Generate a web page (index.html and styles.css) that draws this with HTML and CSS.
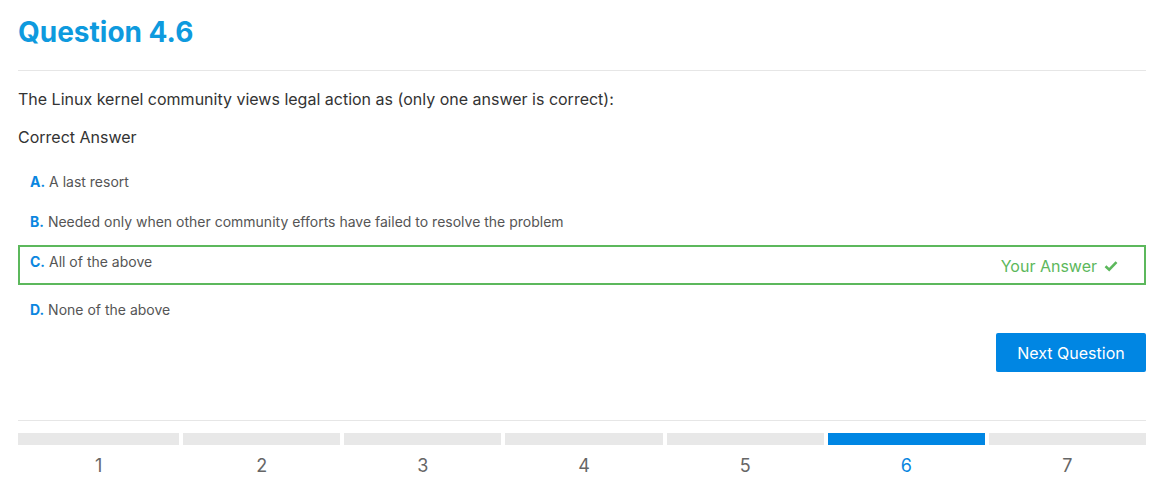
FILE: index.html
```html
<!DOCTYPE html>
<html>
<head>
<meta charset="utf-8">
<link rel="stylesheet" href="styles.css">
</head>
<body>
<div class="page">
  <h1 class="title">Question 4.6</h1>
  <hr class="rule">
  <p class="question">The Linux kernel community views legal action as (only one answer is correct):</p>
  <p class="subhead">Correct Answer</p>
  <ul class="options">
    <li class="option"><span><span class="letter">A.</span> A last resort</span></li>
    <li class="option"><span><span class="letter">B.</span> Needed only when other community efforts have failed to resolve the problem</span></li>
    <li class="option selected"><span><span class="letter">C.</span> All of the above</span>
      <span class="yours">Your Answer
        <svg class="check" viewBox="0 0 14 12" width="14" height="12"><path d="M1.5 6.2 L5.2 9.6 L12.5 2.2" fill="none" stroke="#5cb85c" stroke-width="2.6"/></svg>
      </span>
    </li>
    <li class="option"><span><span class="letter">D.</span> None of the above</span></li>
  </ul>
  <div class="actions"><button class="next">Next Question</button></div>
  <hr class="rule rule-bottom">
  <div class="steps">
    <div class="step"><div class="bar"></div><div class="num">1</div></div>
    <div class="step"><div class="bar"></div><div class="num">2</div></div>
    <div class="step"><div class="bar"></div><div class="num">3</div></div>
    <div class="step"><div class="bar"></div><div class="num">4</div></div>
    <div class="step"><div class="bar"></div><div class="num">5</div></div>
    <div class="step current"><div class="bar"></div><div class="num">6</div></div>
    <div class="step"><div class="bar"></div><div class="num">7</div></div>
  </div>
</div>
</body>
</html>
```
FILE: styles.css
```css
* { box-sizing: border-box; }
html, body { margin: 0; padding: 0; background: #fff; }
body { font-family: Inter, "Noto Sans", sans-serif; color: #333; }
.page { padding: 0 18px; }
.title {
  margin: 0;
  padding-top: 14px;
  font-size: 28px;
  line-height: 36px;
  font-weight: 700;
  color: #0e9ade;
}
.rule { border: 0; border-top: 1px solid #e6e6e6; margin: 20px 0 0; }
.question { margin: 17px 0 0; font-size: 16px; line-height: 22px; color: #333; }
.subhead { margin: 16px 0 0; font-size: 16px; line-height: 22px; color: #333; }
.options { list-style: none; margin: 14px 0 0; padding: 0; }
.option {
  display: flex;
  justify-content: space-between;
  align-items: flex-start;
  height: 40px;
  padding: 10px 12px;
  font-size: 14px;
  line-height: 20px;
  color: #555;
}
.option.selected {
  border: 2px solid #5cb85c;
  margin: 3px 0 5px;
  padding: 5px 10px;
}
.letter { color: #0a86e0; font-weight: 700; }
.yours {
  color: #5cb85c;
  font-size: 16px;
  line-height: 20px;
  margin-top: 4px;
  margin-right: 16px;
  display: flex;
  align-items: center;
  gap: 7px;
}
.check { display: block; }
.actions { display: flex; justify-content: flex-end; margin-top: 3px; }
.next {
  font-family: Inter, "Noto Sans", sans-serif;
  background: #0086e3;
  color: #fff;
  border: 0;
  border-radius: 2px;
  width: 150px;
  height: 39px;
  font-size: 16px;
}
.rule-bottom { margin-top: 48px; }
.steps { display: grid; grid-template-columns: repeat(7, 1fr); margin-top: 12px; }
.step { padding-left: 4px; }
.step:first-child { padding-left: 0; }
.bar { height: 12px; background: #e8e8e8; }
.current .bar { background: #0086e3; }
.num { text-align: center; font-size: 18px; line-height: 22px; margin-top: 10px; color: #666; }
.current .num { color: #0a86e0; }
```
